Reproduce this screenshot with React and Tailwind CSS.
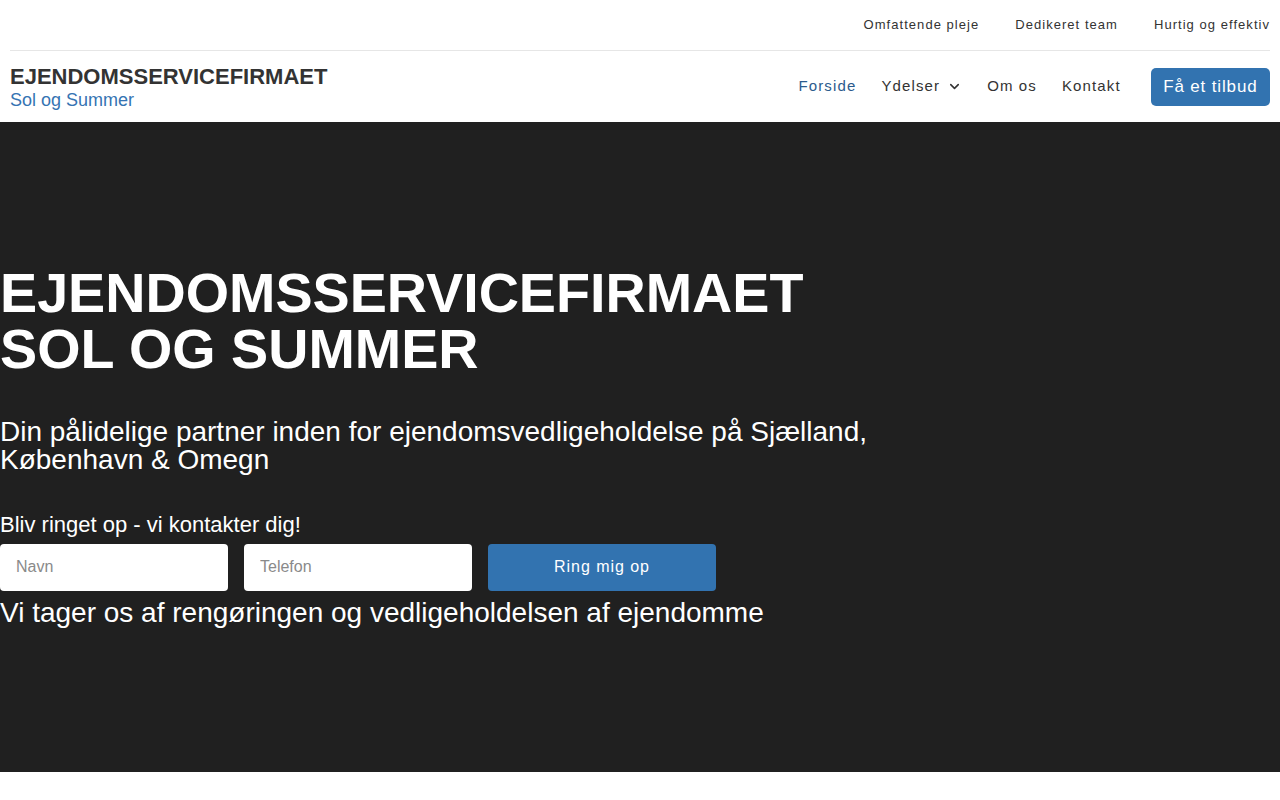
import { ChevronDown } from 'lucide-react'

const topLinks = ['Omfattende pleje', 'Dedikeret team', 'Hurtig og effektiv']
const navLinks = [
  { label: 'Forside', active: true },
  { label: 'Ydelser', dropdown: true },
  { label: 'Om os' },
  { label: 'Kontakt' },
]

function Header() {
  return (
    <header className="bg-white px-[10px]">
      <div className="flex h-[51px] items-center justify-end gap-9 border-b border-[#e6e6e6] text-[13px] tracking-[0.08em] text-[#333]">
        {topLinks.map((l) => (
          <a key={l} href="#" className="hover:text-[#3273b0]">{l}</a>
        ))}
      </div>
      <div className="flex h-[71px] items-center justify-between">
        <a href="#" className="flex flex-col pt-[3px]">
          <span className="text-[22px] font-bold leading-[24px] text-[#333]">EJENDOMSSERVICEFIRMAET</span>
          <span className="text-[18px] leading-[22px] text-[#3574b3]">Sol og Summer</span>
        </a>
        <nav className="flex items-center">
          {navLinks.map((n) => (
            <a
              key={n.label}
              href="#"
              className={`mr-[25px] flex items-center gap-[7px] text-[15px] tracking-[0.075em] ${n.active ? 'text-[#2b5b8d]' : 'text-[#333]'}`}
            >
              {n.label}
              {n.dropdown && <ChevronDown size={15} strokeWidth={2.5} />}
            </a>
          ))}
          <a
            href="#"
            className="ml-[5px] flex h-[38px] items-center rounded-[5px] bg-[#3273b0] px-[12.5px] text-[17px] tracking-[0.05em] text-white"
          >
            Få et tilbud
          </a>
        </nav>
      </div>
    </header>
  )
}

function Hero() {
  return (
    <section className="flex h-[650px] flex-col justify-center bg-[#202020] text-white">
      <div className="max-w-[900px]">
        <h1 className="text-[55.7px] font-bold leading-[56px]">
          EJENDOMSSERVICEFIRMAET
          <br />
          SOL OG SUMMER
        </h1>
        <p className="mt-[41px] text-[28px] leading-[28px]">
          Din pålidelige partner inden for ejendomsvedligeholdelse på Sjælland, København &amp; Omegn
        </p>
        <p className="mt-[38px] text-[22px] leading-[26px]">Bliv ringet op - vi kontakter dig!</p>
        <form className="mt-[6px] flex gap-4" onSubmit={(e) => e.preventDefault()}>
          <input
            placeholder="Navn"
            className="h-[47px] w-[228px] rounded-[4px] bg-white px-4 text-[16px] text-[#333] placeholder:text-[#8a8a8a] outline-none"
          />
          <input
            placeholder="Telefon"
            className="h-[47px] w-[228px] rounded-[4px] bg-white px-4 text-[16px] text-[#333] placeholder:text-[#8a8a8a] outline-none"
          />
          <button className="h-[47px] w-[228px] rounded-[4px] bg-[#3273b0] text-[16px] tracking-[0.06em] text-white">
            Ring mig op
          </button>
        </form>
        <p className="mt-[5px] text-[28px] leading-[34px]">Vi tager os af rengøringen og vedligeholdelsen af ejendomme</p>
      </div>
    </section>
  )
}

export default function App() {
  return (
    <div className="min-h-screen bg-white font-['Liberation_Sans',Arial,sans-serif]">
      <Header />
      <Hero />
    </div>
  )
}
